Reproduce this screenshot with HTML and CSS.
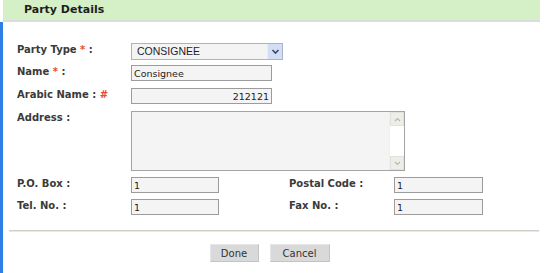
FILE: index.html
```html
<!DOCTYPE html>
<html lang="en">
<head>
<meta charset="UTF-8">
<title>Party Details</title>
<link rel="stylesheet" href="styles.css">
</head>
<body>
<div class="panel-title">Party Details</div>
<div class="panel">
    <div class="form-grid">
        <label class="form-label">Party Type <span class="req">*</span> :</label>
        <div class="select-box span-3">
            <span class="select-text">CONSIGNEE</span>
            <span class="select-arrow">
                <svg width="9" height="7" viewBox="0 0 9 7"><path d="M1.5 2 L4.5 5 L7.5 2" fill="none" stroke="#3b4a66" stroke-width="1.6"/></svg>
            </span>
        </div>

        <label class="form-label">Name <span class="req">*</span> :</label>
        <input type="text" class="form-input w-140 span-3" value="Consignee">

        <label class="form-label">Arabic Name : <span class="req">#</span></label>
        <input type="text" class="form-input w-140 right span-3" value="212121">

        <label class="form-label top">Address :</label>
        <div class="textarea span-3">
            <div class="textarea-body"></div>
            <div class="scrollbar">
                <div class="scroll-btn">
                    <svg width="7" height="5" viewBox="0 0 7 5"><path d="M1 4 L3.5 1.5 L6 4" fill="none" stroke="#b8b8b0" stroke-width="1.2"/></svg>
                </div>
                <div class="scroll-track"></div>
                <div class="scroll-btn">
                    <svg width="7" height="5" viewBox="0 0 7 5"><path d="M1 1 L3.5 3.5 L6 1" fill="none" stroke="#b8b8b0" stroke-width="1.2"/></svg>
                </div>
            </div>
        </div>

        <label class="form-label">P.O. Box :</label>
        <input type="text" class="form-input w-88" value="1">
        <label class="form-label">Postal Code :</label>
        <input type="text" class="form-input w-89" value="1">

        <label class="form-label">Tel. No. :</label>
        <input type="text" class="form-input w-88" value="1">
        <label class="form-label">Fax No. :</label>
        <input type="text" class="form-input w-89" value="1">
    </div>

    <div class="divider"></div>

    <div class="actions">
        <button class="btn btn-done">Done</button>
        <button class="btn btn-cancel">Cancel</button>
    </div>
</div>
</body>
</html>
```

FILE: styles.css
```css
body {
    margin: 0;
    padding: 0;
    background-color: #fff;
    font-family: "DejaVu Sans", Verdana, sans-serif;
    color: #333;
}
.panel-title {
    width: 516px;
    height: 20px;
    margin-left: 3px;
    padding-left: 21px;
    background-color: #d5f0c6;
    border-bottom: 2px solid #dcdcdc;
    font-size: 11px;
    font-weight: bold;
    line-height: 20px;
    color: #1e1e1e;
}
.panel {
    border-left: 3px solid #2f7ee6;
    height: 251px;
    box-sizing: border-box;
    padding-top: 21px;
}
.form-grid {
    display: grid;
    grid-template-columns: 114px 158px 105px auto;
    grid-template-rows: 16px 17px 17px 60px 16px 16px;
    row-gap: 6px;
    padding-left: 14px;
}
.span-3 {
    grid-column: span 3;
}
.form-label {
    font-size: 10px;
    font-weight: bold;
    color: #3a3a3a;
    line-height: 14px;
}
.form-label.top {
    padding-top: 0;
}
.req {
    color: #ec4a36;
}
.form-input {
    box-sizing: border-box;
    height: 16px;
    margin: 0;
    padding: 0 2px;
    border: 1px solid #9c9c9c;
    background-color: #f4f4f4;
    font-family: "DejaVu Sans", Verdana, sans-serif;
    font-size: 9.5px;
    color: #222;
    outline: none;
}
.form-input.right {
    text-align: right;
}
.w-140 { width: 141px; }
.w-88 { width: 88px; }
.w-89 { width: 89px; }

.select-box {
    box-sizing: border-box;
    width: 152px;
    height: 17px;
    display: flex;
    border: 1px solid #a9b4c8;
    background-color: #f4f4f4;
}
.select-text {
    flex: 1;
    padding-left: 5px;
    font-family: "Liberation Sans", Arial, sans-serif;
    font-size: 10.5px;
    line-height: 15px;
    color: #1c1c2c;
}
.select-arrow {
    width: 14px;
    display: flex;
    align-items: center;
    justify-content: center;
    background-color: #d2def4;
    border-left: 1px solid #e8eef9;
}

.textarea {
    box-sizing: border-box;
    width: 274px;
    height: 60px;
    display: flex;
    border: 1px solid #a4a4a4;
    background-color: #f4f4f4;
}
.textarea-body {
    flex: 1;
}
.scrollbar {
    width: 14px;
    display: flex;
    flex-direction: column;
    background-color: #fff;
    border-left: 1px solid #f0f0ee;
}
.scroll-btn {
    height: 14px;
    display: flex;
    align-items: center;
    justify-content: center;
    background-color: #eeeee8;
    border: 1px solid #e2e2dc;
    box-sizing: border-box;
}
.scroll-track {
    flex: 1;
}

.divider {
    margin: 15px 0 0 6px;
    width: 530px;
    border-top: 1px solid #cfcfc8;
    border-bottom: 1px solid #e8e8e4;
}
.actions {
    display: flex;
    justify-content: center;
    gap: 11px;
    padding-top: 12px;
    padding-right: 14px;
}
.btn {
    height: 18px;
    padding: 0;
    border: 1px solid #e6e6e6;
    border-bottom-color: #c4c4c4;
    border-right-color: #c4c4c4;
    background-color: #d9d9d9;
    font-family: "DejaVu Sans", Verdana, sans-serif;
    font-size: 10px;
    color: #333;
    cursor: pointer;
}
.btn-done { width: 49px; }
.btn-cancel { width: 60px; }
```
